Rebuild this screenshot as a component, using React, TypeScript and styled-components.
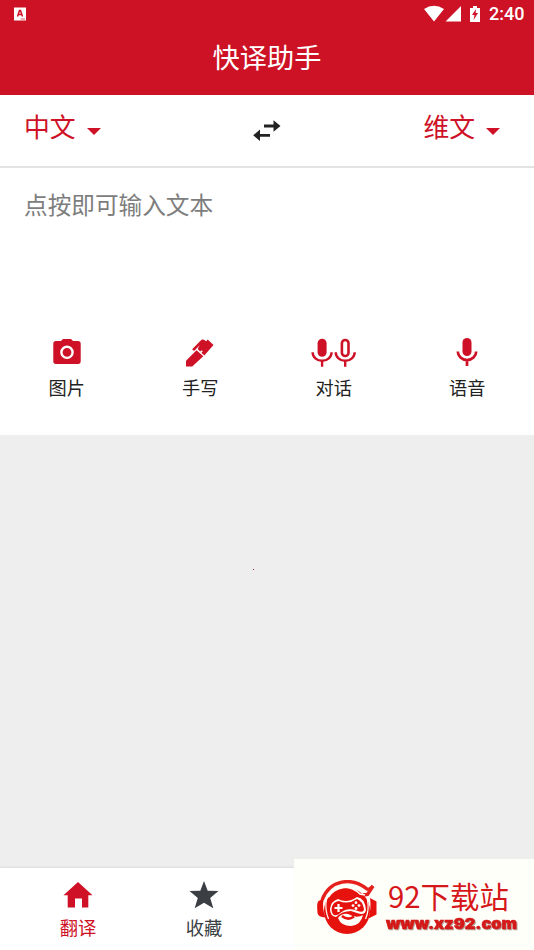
import React from 'react';
import styled, { createGlobalStyle } from 'styled-components';

const RED = '#ce1126';

const GlobalStyle = createGlobalStyle`
  * { box-sizing: border-box; }
  html, body { margin: 0; padding: 0; }
  body { font-family: 'Noto Sans CJK SC', sans-serif; background: #eee; overflow: hidden; }
  svg { display: block; flex: none; }
`;

const Screen = styled.main`
  position: relative;
  display: flex;
  flex-direction: column;
  width: 534px;
  height: 950px;
  background: #eee;
`;

const Header = styled.header`
  height: 95px;
  background: #ce1226;
  color: #fff;
`;

const StatusBar = styled.div`
  display: flex;
  align-items: center;
  justify-content: space-between;
  height: 28px;
  padding: 0 9px 0 14px;
`;

const StatusIcons = styled.div`
  display: flex;
  align-items: center;
`;

const Clock = styled.span`
  font: 500 18px/28px Roboto, sans-serif;
  width: 36px;
  white-space: nowrap;
`;

const Title = styled.h1`
  margin: 0;
  font-size: 27.2px;
  font-weight: 400;
  line-height: 40px;
  padding-top: 8px;
  text-align: center;
`;

const LanguageBar = styled.section`
  display: flex;
  align-items: center;
  justify-content: space-between;
  height: 73px;
  padding: 0 34px 2px 24px;
  background: #fff;
  border-bottom: 2px solid #e3e3e3;
`;

const Language = styled.button`
  display: flex;
  align-items: center;
  gap: 11px;
  padding: 0;
  border: 0;
  background: none;
  color: ${RED};
  font: 400 25.8px/38px 'Noto Sans CJK SC', sans-serif;
  height: 38px;
  margin-top: -7px;

  svg { margin-top: 10px; }
`;

const SwapButton = styled.button`
  display: flex;
  padding: 0;
  border: 0;
  background: none;
  margin: 2px -10px 0 0;
`;

const InputPanel = styled.section`
  display: flex;
  flex-direction: column;
  height: 267px;
  background: #fff;
`;

const Placeholder = styled.p`
  margin: 0;
  height: 169px;
  padding: 18px 24px 0;
  font-size: 23.65px;
  line-height: 36px;
  color: #7d7d7d;
`;

const Tools = styled.div`
  display: grid;
  grid-template-columns: repeat(4, 1fr);
`;

const Tool = styled.button`
  display: flex;
  flex-direction: column;
  align-items: center;
  padding: 0;
  border: 0;
  background: none;
  color: #222;
  font: 400 18.2px/26px 'Noto Sans CJK SC', sans-serif;

  svg { margin-bottom: 5px; }
`;

const Content = styled.section`
  display: flex;
  justify-content: center;
  flex: 1;
  padding: 134px 27px 0 0;
`;

const Dot = styled.i`
  width: 1px;
  height: 1px;
  background: #a02040;
`;

const TabBar = styled.nav`
  display: flex;
  height: 82px;
  padding: 11px 0 0 15px;
  background: #fff;
  box-shadow: 0 -1px 2px #dcdcdc;
`;

const Tab = styled.button<{ $active?: boolean }>`
  display: flex;
  flex-direction: column;
  align-items: center;
  width: 126px;
  padding: 0;
  border: 0;
  background: none;
  color: ${({ $active }) => ($active ? RED : '#3b3f43')};
  font: 400 18.3px/26px 'Noto Sans CJK SC', sans-serif;

  svg { margin-bottom: 5px; }
`;

const SiteBadge = styled.aside`
  position: absolute;
  right: 0;
  bottom: 0;
  display: flex;
  width: 240px;
  height: 91px;
  padding: 21px 0 0 22px;
  background: #fffffa;
`;

const SiteText = styled.div`
  display: flex;
  flex-direction: column;
  margin: -3px 0 0 10px;
`;

const SiteName = styled.span`
  font-size: 29.4px;
  line-height: 36px;
  color: #d6171a;
  white-space: nowrap;
`;

const SiteUrl = styled.svg`
  margin: 0 0 0 -3px;
  font: 900 15px/20px Inter, sans-serif;
  fill: #d41919;
  stroke: #d41919;
  stroke-width: 0.6px;
  filter: drop-shadow(1px 1.5px 0.7px #b5a79e);
`;

const CaretIcon = () => (
  <svg width="14" height="7" viewBox="0 0 14 7"><path d="M0 0h14L7 7z" fill={RED} /></svg>
);

const micStand = 'M1 14.5a9.5 8.5 0 0 0 19 0M10.5 23v6';

const MicIcon = () => (
  <svg width="22" height="32" viewBox="0 0 22 32" fill="none">
    <rect x="6.5" y="1" width="9" height="18" rx="4.5" fill={RED} />
    <path d="M1.8 14.5a9.2 8.6 0 0 0 18.4 0M11 23v6" stroke={RED} strokeWidth="2.7" />
  </svg>
);

const TalkIcon = () => (
  <svg width="45" height="32" viewBox="0 0 45 32" fill="none" stroke={RED}>
    <g transform="translate(.6 .8)">
      <rect x="6" y="1" width="9" height="18" rx="4.5" fill={RED} stroke="none" />
      <path d={micStand} strokeWidth="2.4" />
    </g>
    <g transform="translate(23.7 .8)">
      <rect x="7.2" y="2.2" width="6.6" height="16" rx="3.3" strokeWidth="2.6" />
      <path d={micStand} strokeWidth="2.4" />
    </g>
  </svg>
);

const CameraIcon = () => (
  <svg width="28" height="32" viewBox="0 0 28 32">
    <path d="M3 4h5l2-2h8l2 2h5q2.7 0 2.7 2.7v17.6Q27.7 27 25 27H3Q.3 27 .3 24.3V6.7Q.3 4 3 4z" fill={RED} />
    <circle cx="14" cy="15.3" r="5.6" fill="none" stroke="#fff" strokeWidth="2.4" />
  </svg>
);

const PenIcon = () => (
  <svg width="28" height="32" viewBox="0 0 28 32" fill={RED}>
    <path d="M0 29.5v-5.8L10.5 13.3l6.8 6L6.2 29.5z" />
    <path d="M11.8 12L14 7l3-4.3 3 1.7 1.7-1.8 5.8 5.4-9.2 10.5-2.9-2.8 1.4-1.5-1.1-1-1.6 1.2z" />
    <path d="M7.1 13.1L15.5 4.6q1.2-1.2 2.6 0l1.6 1.3" fill="none" stroke={RED} strokeWidth="2.7" />
  </svg>
);

const SwapIcon = () => (
  <svg width="28" height="22" viewBox="0 0 28 22" fill="#222">
    <path d="M11 4.5h9.5V.2L27.5 6l-7 5.7V7.4H11zM17 16.8H7v4.3L.2 15.3 7 9.6v4.3h10z" />
  </svg>
);

const SiteLogo = () => (
  <svg width="62" height="56" viewBox="0 0 62 56" fill="none">
    <path d="M6 20C14-1 36-3 51 9l2.5.2L57 6l-5.5 8.5-4.5.5" stroke="#e6201c" strokeWidth="3.4" />
    <circle cx="31" cy="31" r="23" fill="#e6120d" />
    <path d="M12.5 17C20 5 34 4 44 14l5 1" stroke="#fffffa" strokeWidth="1.6" />
    <path d="M10.5 19q-2 10 2 20M51.5 20q2 10-2 19" stroke="#fffffa" strokeWidth="1.2" />
    <path d="M7.7 18.5L2.5 21Q.5 22 1.5 33q.5 4 8 4.5Q5.7 28 7.7 18.5zM54 18l6.5 3.5v13l-8 4q3-10 1.5-20.5z" fill="#e6120d" />
    <path d="M14 29q1-8 8-10 9 5 19-2 8 1 9 13-1 6-9 3l-6-2q-9 0-15 6-6-1-6-8z" fill="#fffffa" />
    <path d="M15.5 29q1-7.5 7.5-8 9 4 18-2 5.5 2 7 10 0 4.5-7.5 1.5-10-4-18 4-6.5 3-7-5.5z" fill="#e6120d" />
    <path d="M22.5 24v8M18.5 28h8" stroke="#fffffa" strokeWidth="2.2" />
    <g fill="#fffffa"><circle cx="40" cy="22.7" r="1.4" /><circle cx="37" cy="25.6" r="1.4" /><circle cx="43" cy="25.6" r="1.4" /><circle cx="40" cy="28.5" r="1.4" /></g>
    <path d="M22 38q4-5 10-4 9 5 15 1-2 10-12 11-10 0-13-8z" fill="#fffffa" />
    <path d="M26 36q6 5 12 .5" stroke="#e6120d" strokeWidth="2.6" />
  </svg>
);

export default function App() {
  return (
    <>
      <GlobalStyle />
      <Screen>
        <Header>
          <StatusBar>
            <svg width="12" height="14" viewBox="0 0 12 14">
              <path d="M0 .5h12v13H0z" fill="#fff" />
              <path d="M3.5 9.5l2-6h1l2 6M4.5 7.5h3" fill="none" stroke={RED} strokeWidth="1.5" />
              <path d="M6.5 12h4.5" stroke={RED} strokeWidth=".7" />
            </svg>
            <StatusIcons>
              <svg width="65" height="18" viewBox="0 0 65 18" fill="#fff">
                <path d="M0 4q10-6.5 20 0L10 16.5zM37 1v15.5H21.5zM46 3h3V1h4v2h3v14H46z" />
                <path d="M52 4l-4 6h2.5L49.5 15l4.5-7h-2.4z" fill={RED} />
              </svg>
              <Clock>2:40</Clock>
            </StatusIcons>
          </StatusBar>
          <Title>快译助手</Title>
        </Header>
        <LanguageBar>
          <Language>中文<CaretIcon /></Language>
          <SwapButton aria-label="交换"><SwapIcon /></SwapButton>
          <Language>维文<CaretIcon /></Language>
        </LanguageBar>
        <InputPanel>
          <Placeholder>点按即可输入文本</Placeholder>
          <Tools>
            <Tool><CameraIcon />图片</Tool>
            <Tool><PenIcon />手写</Tool>
            <Tool><TalkIcon />对话</Tool>
            <Tool><MicIcon />语音</Tool>
          </Tools>
        </InputPanel>
        <Content><Dot /></Content>
        <TabBar>
          <Tab $active>
            <svg width="30" height="30" viewBox="0 0 30 30" fill="currentColor"><path d="M15 3l14.5 13.3h-4.2V28.5H19v-9h-7v9H4.7V16.3H.5z" /></svg>
            翻译
          </Tab>
          <Tab>
            <svg width="30" height="30" viewBox="0 0 30 30" fill="currentColor"><path d="M15 2l3.7 9.7L29.5 12l-8.3 7 3.1 10.3L15 23.7l-9.3 5.6L8.8 19 .5 12l10.8-.3z" /></svg>
            收藏
          </Tab>
        </TabBar>
        <SiteBadge>
          <SiteLogo />
          <SiteText>
            <SiteName>92下载站</SiteName>
            <SiteUrl width="136" height="22" viewBox="0 0 136 22">
              <text x="1" y="16" textLength="131" lengthAdjust="spacingAndGlyphs">www.xz92.com</text>
            </SiteUrl>
          </SiteText>
        </SiteBadge>
      </Screen>
    </>
  );
}
